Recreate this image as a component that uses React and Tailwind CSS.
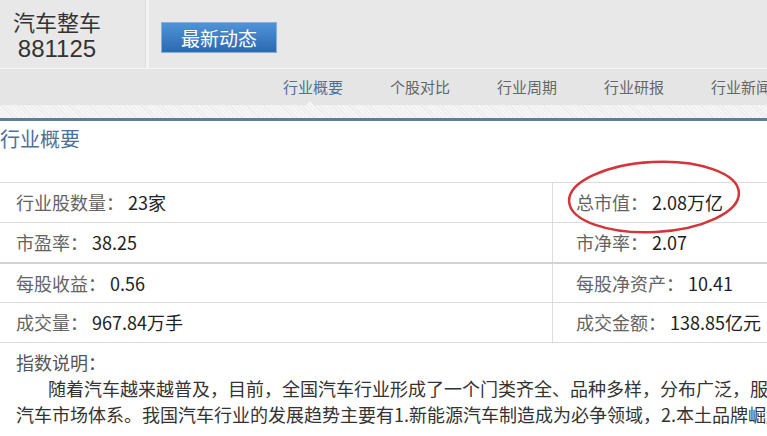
const rows = [
    [['行业股数量：', '23家'], ['总市值：', '2.08万亿']],
    [['市盈率：', '38.25'], ['市净率：', '2.07']],
    [['每股收益：', '0.56'], ['每股净资产：', '10.41']],
    [['成交量：', '967.84万手'], ['成交金额：', '138.85亿元']],
];

const tabs = ['行业概要', '个股对比', '行业周期', '行业研报', '行业新闻'];

const Cell = ({ label, value }) => (
    <span className="whitespace-nowrap">
        <span className="text-[#646464]">{label}</span>
        <span className="ml-[4px] text-[#222]">{value}</span>
    </span>
);

const App = () => {
    return (
        <div
            className="relative w-[767px] h-[436px] overflow-hidden bg-white"
            style={{ fontFamily: '"Noto Sans CJK SC", "Liberation Sans", sans-serif' }}
        >
            {/* Header */}
            <div className="flex h-[68px] bg-[#e8e8e8]">
                <div className="w-[114px] pt-[7px] text-center text-[#333] leading-[28px]">
                    <div className="text-[22px]">汽车整车</div>
                    <div className="text-[24px] font-['Liberation_Sans',sans-serif]">881125</div>
                </div>
                <div className="w-[31px]" />
                <div className="w-[1px] bg-[#dddddd]" />
                <div className="w-[3px] bg-[#f3f3f3]" />
                <div className="ml-[12px] mt-[22px]">
                    <button className="w-[116px] h-[31px] border border-[#7fb0e0] bg-[linear-gradient(#4f93d8,#2c69b0)] text-white text-[19px] leading-[29px]">
                        最新动态
                    </button>
                </div>
            </div>
            <div className="h-[1px] bg-[#f6f6f6]" />

            {/* Tabs */}
            <div className="relative flex h-[36px] items-center gap-[47px] bg-[#e5e5e5] pl-[283px] text-[15px] text-[#666]">
                {tabs.map((t, i) => (
                    <span key={t} className={'whitespace-nowrap ' + (i === 0 ? 'text-[#4a7196]' : '')}>
                        {t}
                    </span>
                ))}
                <div className="absolute bottom-0 left-[306px] h-0 w-0 border-x-[4px] border-b-[4px] border-x-transparent border-b-[#f4f4f4]" />
            </div>
            <div className="h-[13px] bg-[#f2f2f2] bg-[repeating-linear-gradient(45deg,#ececec_0px,#ececec_1px,#f5f5f5_1px,#f5f5f5_3px)]" />
            <div className="h-[3px] bg-[#5a7e9e]" />

            {/* Content */}
            <div className="h-[61px] pt-[4px] text-[20px] leading-[28px] text-[#4d7196]">行业概要</div>

            <div className="text-[18px]">
                {rows.map((r, i) => (
                    <div
                        key={i}
                        className={
                            'grid h-[40px] grid-cols-[552px_1fr] ' +
                            (i === 2 ? 'border-t-2 border-[#d2d2d2]' : 'border-t border-[#dcdcdc]')
                        }
                    >
                        <div className="flex items-center pl-[16px]">
                            <Cell label={r[0][0]} value={r[0][1]} />
                        </div>
                        <div className="flex items-center border-l border-[#dcdcdc] pl-[23px]">
                            <Cell label={r[1][0]} value={r[1][1]} />
                        </div>
                    </div>
                ))}
                <div className="border-t border-[#dcdcdc]" />
            </div>

            <div className="mt-[6px] pl-[16px] text-[18px] leading-[26px] text-[#333]">
                <div className="text-[#555]">指数说明：</div>
                <div className="whitespace-nowrap pl-[32px]">
                    随着汽车越来越普及，目前，全国汽车行业形成了一个门类齐全、品种多样，分布广泛，服务完善的
                </div>
                <div className="whitespace-nowrap">
                    汽车市场体系。我国汽车行业的发展趋势主要有1.新能源汽车制造成为必争领域，2.本土品牌崛起，3.汽车后市场
                </div>
            </div>

            {/* Red annotation */}
            <svg className="absolute left-[564px] top-[157px]" width="180" height="80" viewBox="0 0 180 80">
                <ellipse
                    cx="90"
                    cy="40"
                    rx="85"
                    ry="35"
                    fill="none"
                    stroke="#d3353a"
                    strokeWidth="2.5"
                    transform="rotate(-3 90 40)"
                />
            </svg>
        </div>
    );
};

export default App;
